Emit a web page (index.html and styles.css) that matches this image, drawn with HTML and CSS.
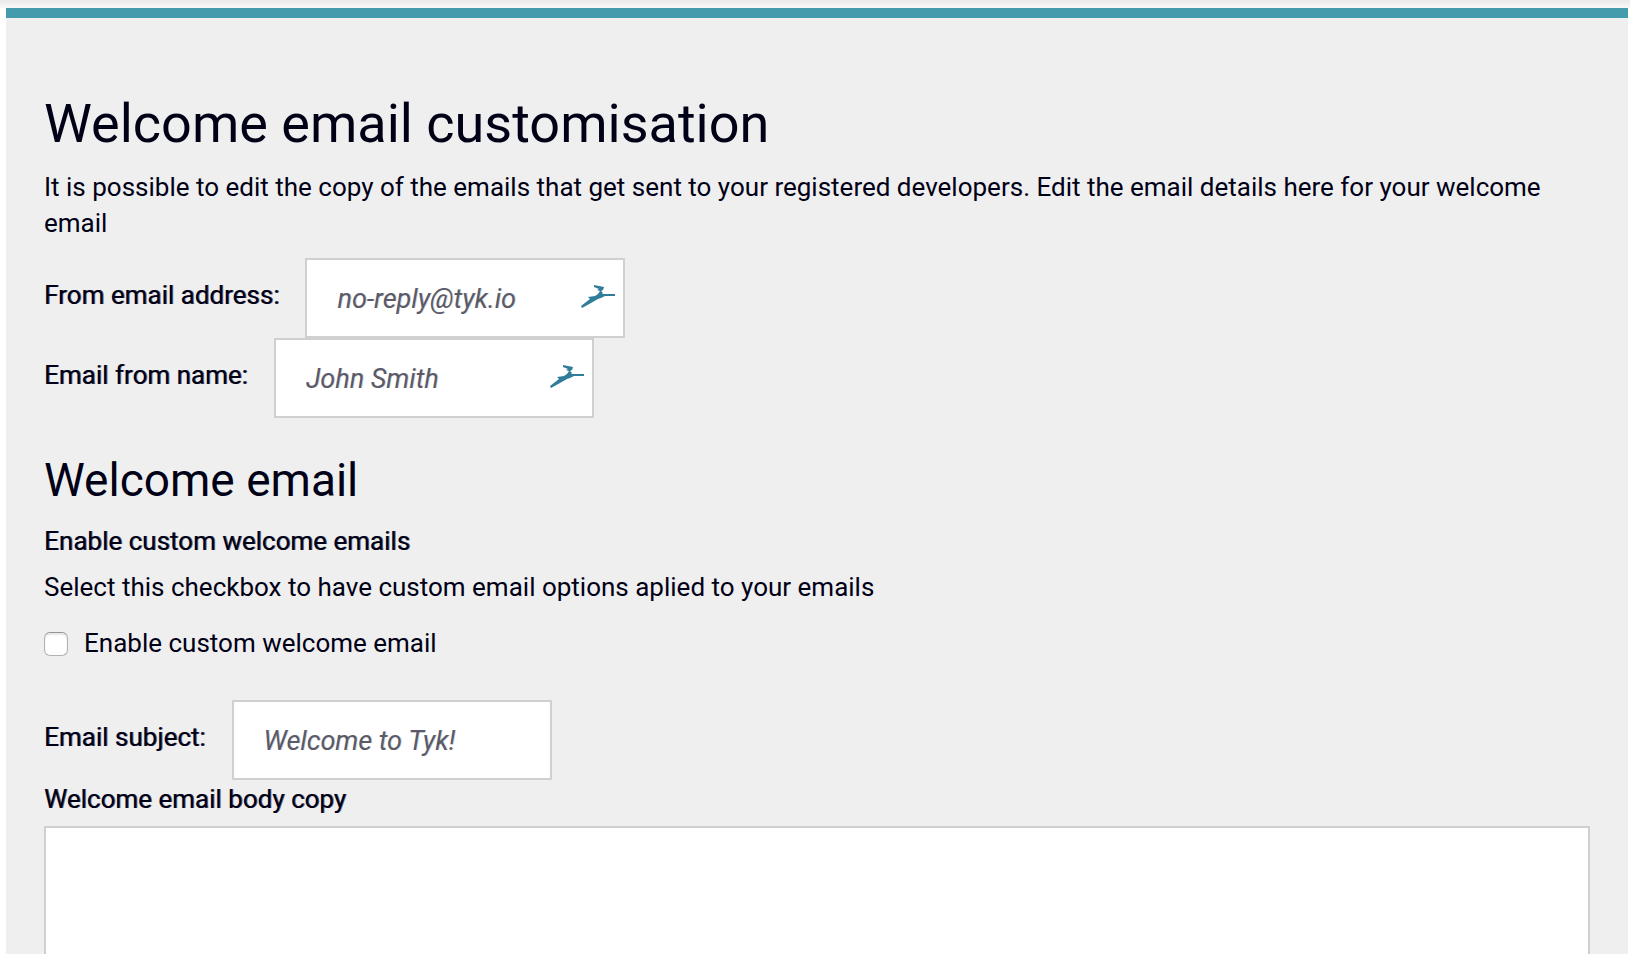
FILE: index.html
```html
<!DOCTYPE html>
<html lang="en">
<head>
<meta charset="utf-8">
<meta name="viewport" content="width=device-width, initial-scale=1">
<title>Welcome email customisation</title>
<link rel="stylesheet" href="styles.css">
</head>
<body>
<div class="page">
  <div class="top-shade"></div>
  <main class="panel">
    <h1 class="title">Welcome email customisation</h1>
    <p class="intro">It is possible to edit the copy of the emails that get sent to your registered developers. Edit the email details here for your welcome email</p>
    <form class="form">
      <div class="field">
        <label class="label" for="from-email">From email address:</label>
        <div class="control">
          <input class="input" id="from-email" type="text" placeholder="no-reply@tyk.io">
          <svg class="autofill" viewBox="0 0 34 24" aria-hidden="true"><path d="M13 0 18 1 23 2 22 5 20 6 22 8 21 9 34 9V11H24L20 13 17 14 10 18 1 23 0 21 9 14 7 12 14 11 17 9 19 6 16 5 18 4 13 2Z"/></svg>
        </div>
      </div>
      <div class="field">
        <label class="label" for="from-name">Email from name:</label>
        <div class="control">
          <input class="input" id="from-name" type="text" placeholder="John Smith">
          <svg class="autofill" viewBox="0 0 34 24" aria-hidden="true"><path d="M13 0 18 1 23 2 22 5 20 6 22 8 21 9 34 9V11H24L20 13 17 14 10 18 1 23 0 21 9 14 7 12 14 11 17 9 19 6 16 5 18 4 13 2Z"/></svg>
        </div>
      </div>
      <h2 class="subtitle">Welcome email</h2>
      <h3 class="strong">Enable custom welcome emails</h3>
      <p class="hint">Select this checkbox to have custom email options aplied to your emails</p>
      <label class="check"><input class="checkbox" type="checkbox">Enable custom welcome email</label>
      <div class="field">
        <label class="label" for="subject">Email subject:</label>
        <div class="control">
          <input class="input" id="subject" type="text" placeholder="Welcome to Tyk!">
        </div>
      </div>
      <label class="strong-label" for="body-copy">Welcome email body copy</label>
      <textarea class="textarea" id="body-copy"></textarea>
    </form>
  </main>
</div>
</body>
</html>
```
FILE: styles.css
```css
* {
  box-sizing: border-box;
}

body {
  margin: 0;
  background: #fff;
  color: #000016;
  font: 400 26px/36px Roboto, "Liberation Sans", sans-serif;
}

.page {
  height: 100vh;
  overflow: hidden;
}

.top-shade {
  height: 8px;
  background: linear-gradient(#e9e9e9, #f8f8f8);
}

.panel {
  margin: 0 2px 0 6px;
  padding: 76px 38px 38px;
  border-top: 10px solid #449bab;
  background: #efefef;
}

.title,
.subtitle {
  font-weight: 400;
}

.title {
  margin: 0 0 15px;
  font-size: 54px;
  line-height: 60px;
}

.subtitle {
  margin: 36px 0 17px;
  font-size: 46px;
  line-height: 52px;
}

.intro {
  margin: 0 0 17px;
}

.form {
  display: flex;
  flex-direction: column;
}

.field {
  display: flex;
  align-items: center;
  gap: 26px;
}

.label {
  padding-bottom: 6px;
}

.label,
.strong,
.strong-label {
  font-weight: 400;
  text-shadow: 1px 0 #00001699;
}

.strong {
  margin: 0;
  font-size: 26px;
}

.hint {
  margin: 10px 0 20px;
}

.control {
  position: relative;
}

.input {
  display: block;
  width: 320px;
  height: 80px;
  padding: 2px 30px 0;
  border: 2px solid #d0d0d0;
  border-radius: 0;
  background: #fff;
  color: #5a5a68;
  font: italic 400 27px/36px Roboto, "Liberation Sans", sans-serif;
}

.input::placeholder {
  color: #5a5a68;
  opacity: 1;
  text-shadow: 1px 0 #5a5a6840;
}

.autofill {
  position: absolute;
  top: 27px;
  right: 10px;
  width: 34px;
  height: 24px;
  fill: #2f7d99;
}

.check {
  display: flex;
  align-items: center;
  gap: 16px;
  margin-bottom: 39px;
}

.checkbox {
  appearance: none;
  width: 24px;
  height: 24px;
  margin: 2px 0 0;
  border: 1px solid #b0b0b0;
  border-top-color: #959595;
  border-radius: 6px;
  background: #fff;
  box-shadow: inset 0 2px 2px #e8e8e8;
}

.checkbox:checked {
  background: #449bab;
}

.strong-label {
  margin: 1px 0 9px;
}

.textarea {
  width: 100%;
  height: 240px;
  padding: 30px;
  border: 2px solid #d0d0d0;
  border-radius: 0;
  background: #fff;
  color: #5a5a68;
  font: inherit;
  resize: none;
}
```
